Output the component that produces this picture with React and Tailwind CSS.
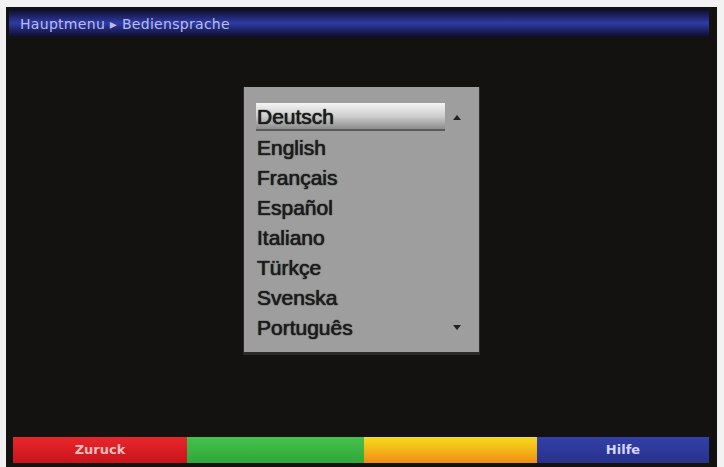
// Receiver OSD - Hauptmenu > Bediensprache
import React from "react";

const languages = [
  "Deutsch",
  "English",
  "Français",
  "Español",
  "Italiano",
  "Türkçe",
  "Svenska",
  "Português",
];

const App = () => {
  const selected = 0;

  return (
    <div className="w-[724px] h-[467px] bg-[#f2f2f2] pt-[7px] pl-[6px] pr-[7px] overflow-hidden">
      <div className="h-full bg-[#141210] flex flex-col">
        {/* Kopfzeile */}
        <div className="mt-[2px] ml-[3px] mr-[8px] h-[28px] flex items-center pt-[2px] pl-[11px] bg-gradient-to-b from-[#0c0c26] via-[#2f3ca8] to-[#0d0d2a]">
          <span className="font-['DejaVu_Sans',sans-serif] text-[14px] text-[#b9bcf2] tracking-[0.3px]">
            Hauptmenu ▸ Bediensprache
          </span>
        </div>

        {/* Sprachauswahl */}
        <div className="flex-1 flex justify-center pt-[50px]">
          <div className="w-[237px] h-[268px] bg-[#9e9e9e] border-b-[3px] border-r-[1px] border-l-[1px] border-[#2a2a2a] pt-[15px] pl-[12px] pr-[10px]">
            {languages.map((lang, i) => (
              <div key={lang} className="h-[30px] flex items-center">
                <div
                  className={
                    i === selected
                      ? "w-[189px] h-[28px] flex items-center pl-[1px] bg-gradient-to-b from-[#f4f4f4] via-[#cfcfcf] to-[#8c8c8c] border-b-2 border-[#5a5a5a]"
                      : "w-[189px] h-[28px] flex items-center pl-[1px]"
                  }
                >
                  <span className="font-['Liberation_Sans',Arial,sans-serif] text-[21px] leading-none text-[#1c1c1c] [text-shadow:0_0_1px_#222,0_0_1px_#222]">
                    {lang}
                  </span>
                </div>
                <div className="flex-1 flex justify-center">
                  {i === 0 && (
                    <svg width="8" height="5" viewBox="0 0 8 5">
                      <path d="M4 0 L8 5 L0 5 Z" fill="#222" />
                    </svg>
                  )}
                  {i === languages.length - 1 && (
                    <svg width="8" height="5" viewBox="0 0 8 5">
                      <path d="M0 0 L8 0 L4 5 Z" fill="#222" />
                    </svg>
                  )}
                </div>
              </div>
            ))}
          </div>
        </div>

        {/* Farbtasten */}
        <div className="ml-[7px] mr-[8px] mb-[4px] h-[26px] flex font-['DejaVu_Sans',sans-serif] text-[13px] font-bold">
          <div className="w-[174px] flex items-center justify-center bg-gradient-to-b from-[#e8262a] to-[#c8141c] text-[#f3bcbc]">
            Zuruck
          </div>
          <div className="w-[177px] bg-gradient-to-b from-[#48c04c] to-[#2fa83a]"></div>
          <div className="w-[173px] bg-gradient-to-b from-[#f2dc1e] to-[#f08c12]"></div>
          <div className="flex-1 flex items-center justify-center bg-gradient-to-b from-[#3440a8] to-[#28318c] text-[#d4d6ff]">
            Hilfe
          </div>
        </div>
      </div>
    </div>
  );
};

export default App;
